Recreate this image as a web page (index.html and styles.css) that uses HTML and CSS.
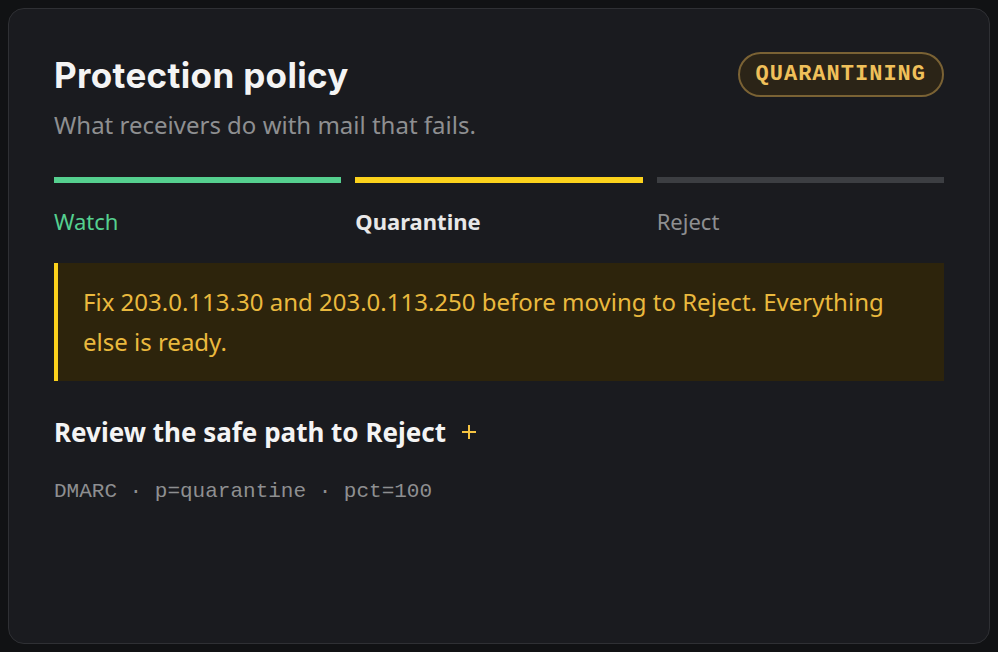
FILE: index.html
```html
<!DOCTYPE html>
<html>
<head>
<meta charset="utf-8">
<link rel="stylesheet" href="styles.css">
</head>
<body>
<section class="card">
  <header class="head">
    <div>
      <h1 class="title">Protection policy</h1>
      <p class="sub">What receivers do with mail that fails.</p>
    </div>
    <span class="badge">QUARANTINING</span>
  </header>
  <div class="steps">
    <div class="step done"><div class="bar"></div><div class="label">Watch</div></div>
    <div class="step current"><div class="bar"></div><div class="label">Quarantine</div></div>
    <div class="step todo"><div class="bar"></div><div class="label">Reject</div></div>
  </div>
  <div class="alert">Fix 203.0.113.30 and 203.0.113.250 before moving to Reject. Everything else is ready.</div>
  <h2 class="review">Review the safe path to Reject<svg class="plus" width="16" height="16" viewBox="0 0 16 16"><path d="M8 1v14M1 8h14" stroke="#f5c342" stroke-width="2"/></svg></h2>
  <p class="record">DMARC · p=quarantine · pct=100</p>
</section>
</body>
</html>
```
FILE: styles.css
```css
html, body { margin: 0; padding: 0; }
body {
  background: #111214;
  padding: 8px;
  height: 652px;
  box-sizing: border-box;
  font-family: "Noto Sans", "Open Sans", sans-serif;
}
.card {
  box-sizing: border-box;
  width: 982px;
  height: 636px;
  background: #1a1b1f;
  border: 1px solid #2f3034;
  border-radius: 16px;
  padding: 44px 45px;
}
.head {
  display: flex;
  justify-content: space-between;
  align-items: flex-start;
}
.title {
  margin: 0;
  font-family: "Inter", sans-serif;
  font-weight: 700;
  font-size: 35px;
  line-height: 44px;
  color: #f4f4f4;
  letter-spacing: 0.35px;
}
.sub {
  margin: 12px 0 0;
  font-size: 24px;
  line-height: 32px;
  color: #8e8f91;
}
.badge {
  margin-top: -1px;
  display: inline-block;
  box-sizing: border-box;
  height: 45px;
  padding: 0 16px;
  line-height: 41px;
  border: 2px solid #7a6234;
  border-radius: 23px;
  background: #2b2417;
  color: #f0c05a;
  font-family: "Liberation Mono", monospace;
  font-weight: 700;
  font-size: 22px;
  letter-spacing: 1px;
}
.steps {
  display: flex;
  gap: 14px;
  margin-top: 36px;
}
.step { flex: 1; }
.bar { height: 6px; }
.label {
  margin-top: 23px;
  font-size: 22px;
  line-height: 30px;
}
.done .bar { background: #55d08f; }
.done .label { color: #55d08f; }
.current .bar { background: #fcd21c; }
.current .label { color: #e8e8e8; font-weight: 700; }
.todo .bar { background: #3c3e42; }
.todo .label { color: #8e8f91; }
.alert {
  margin-top: 27px;
  background: #2d240c;
  border-left: 4px solid #fcd21c;
  padding: 19px 25px;
  color: #eab93e;
  font-size: 24px;
  line-height: 40px;
}
.review {
  display: flex;
  align-items: center;
  gap: 15px;
  margin: 34px 0 0;
  font-size: 26px;
  line-height: 34px;
  font-weight: 700;
  color: #f4f4f4;
}
.plus { flex: none; margin-top: -1px; }
.record {
  margin: 29px 0 0;
  font-family: "Liberation Mono", monospace;
  font-size: 21px;
  line-height: 28px;
  color: #8e8f91;
}
```
